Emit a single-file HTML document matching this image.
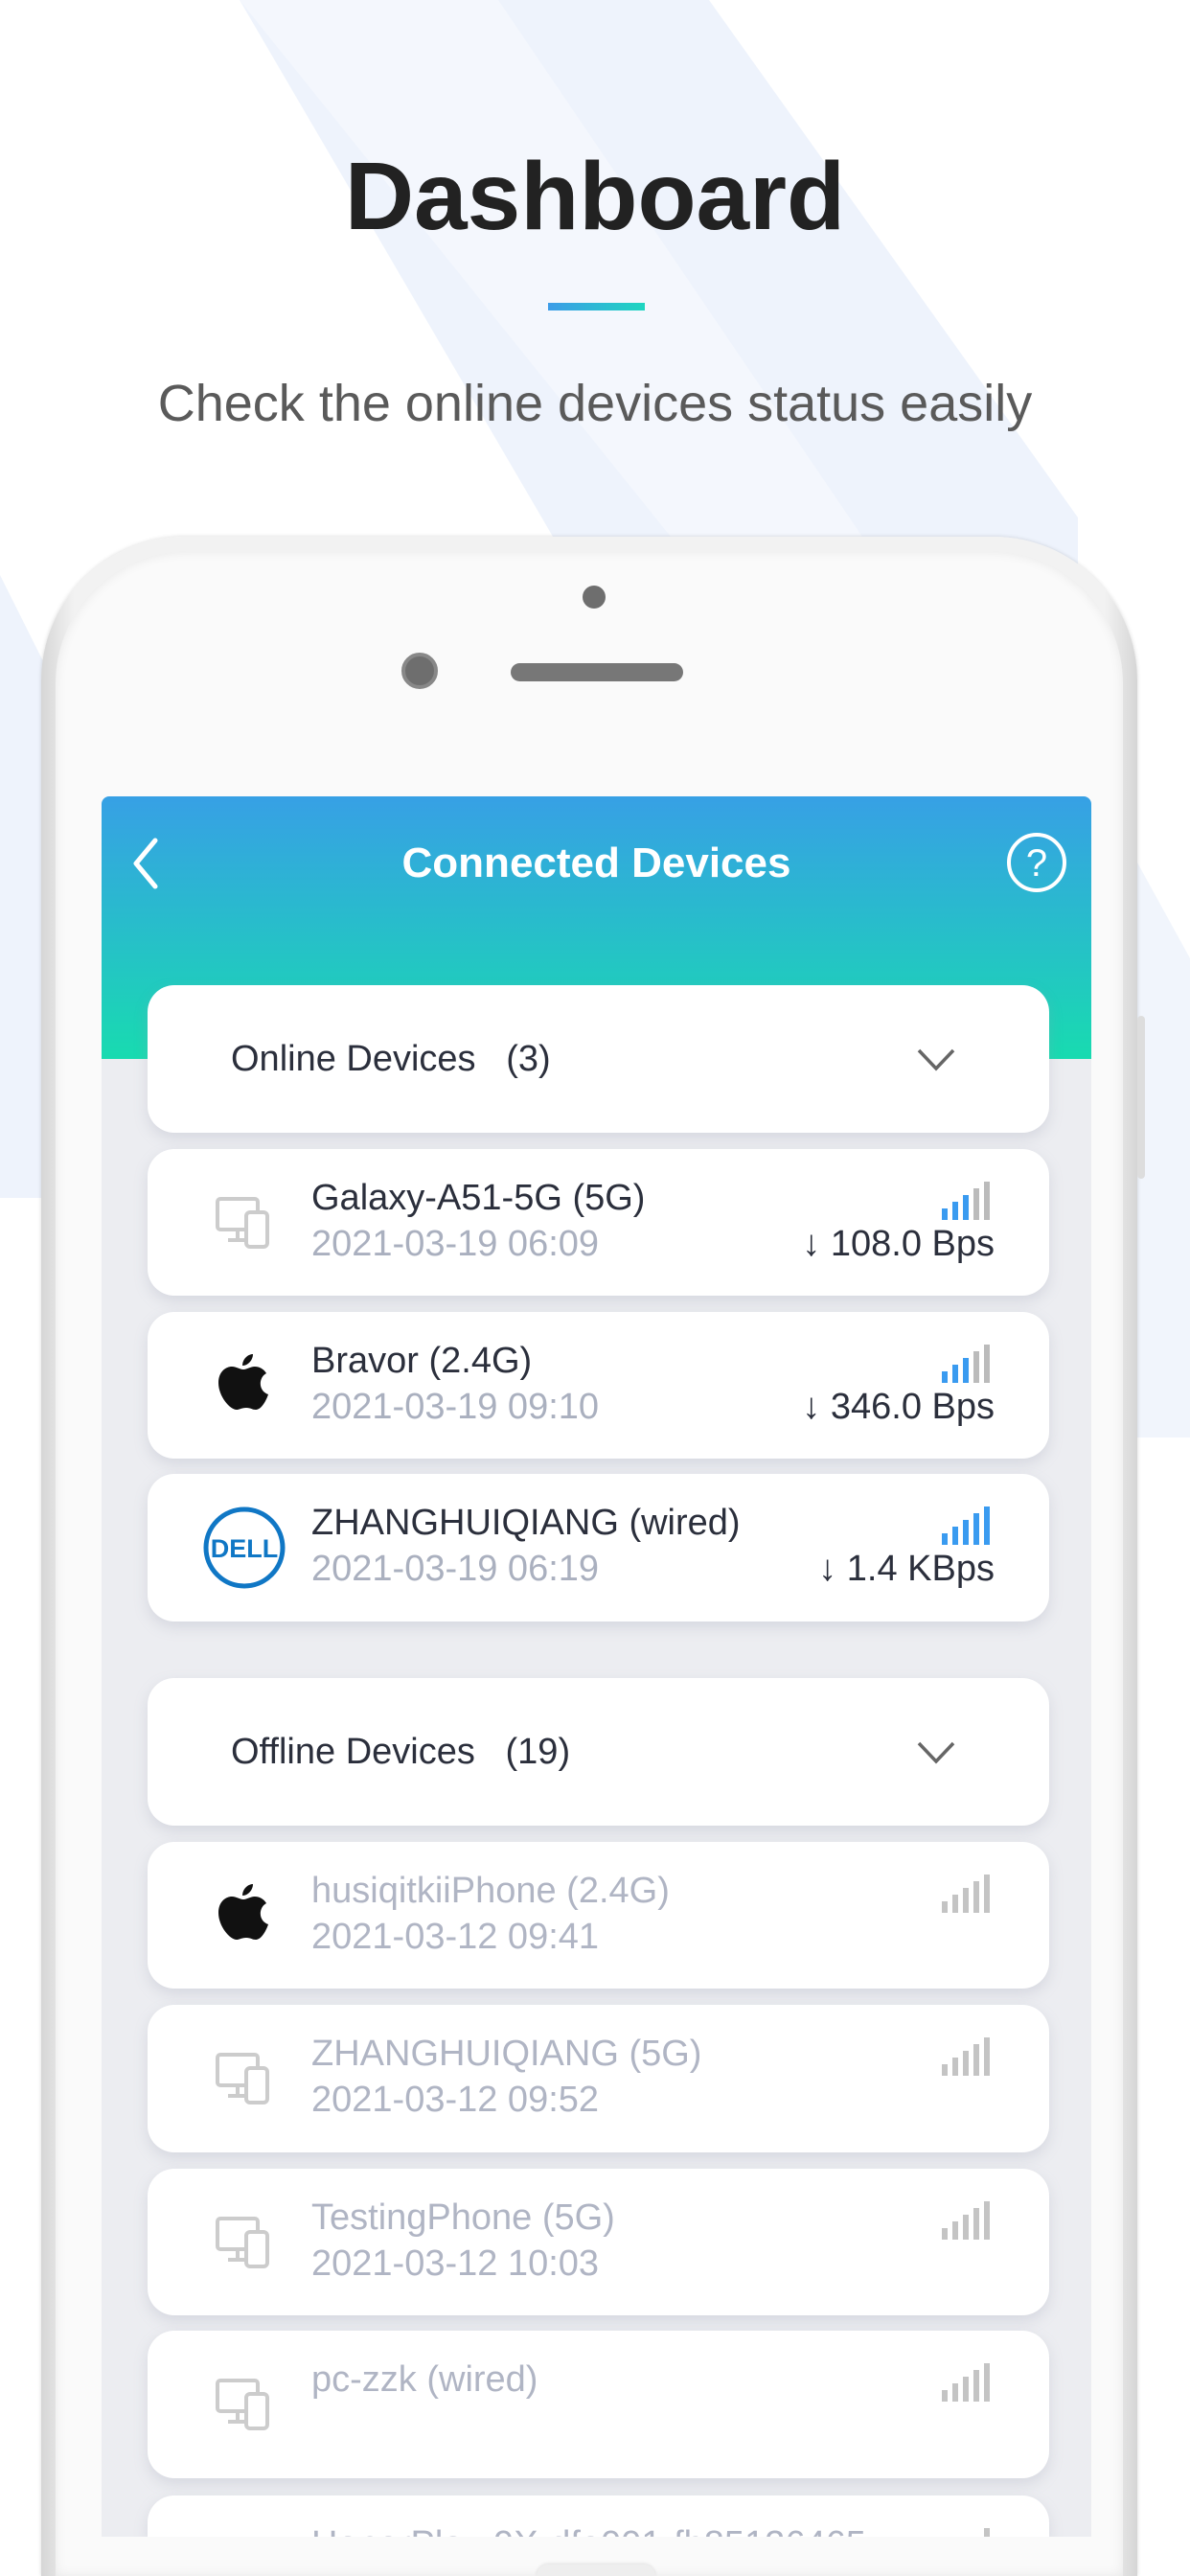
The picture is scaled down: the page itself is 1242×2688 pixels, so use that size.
<!DOCTYPE html>
<html style="width:1242px;height:2688px;overflow:hidden"><head><meta charset="utf-8">
<style>
*{margin:0;padding:0;box-sizing:border-box}
html,body{width:1242px;height:2688px;overflow:hidden}
body{background:#fff;font-family:"Liberation Sans",sans-serif}
#wrap{position:relative;width:1242px;height:2688px;overflow:hidden;background:#fff}
.abs{position:absolute}
.card{position:absolute;left:154px;width:941px;background:#fff;border-radius:28px;box-shadow:0 6px 14px rgba(150,155,175,0.25)}
.name{position:absolute;left:171px;top:26px;font-size:38px;line-height:50px;color:#2b2f3c;white-space:nowrap}
.date{position:absolute;left:171px;top:74px;font-size:38px;line-height:50px;color:#aab0bf;white-space:nowrap}
.off .name,.off .date{color:#b0b5c4}
.speed{position:absolute;right:57px;top:74px;font-size:38px;line-height:50px;color:#2b2f3c;white-space:nowrap}
.sig{position:absolute;left:829px;top:34px}
.ico{position:absolute;left:70px;top:46px}
.hdr{font-size:38px;line-height:50px;color:#2b2f3c;position:absolute;left:87px;top:52px;white-space:pre}
</style></head><body><div id="wrap">
<svg class="abs" style="left:0;top:0" width="1242" height="2688">
<polygon points="250,0 740,0 1125,540 1125,1250 980,1250" fill="#eef3fc"/>
<polygon points="250,0 520,0 900,560 700,560" fill="#f4f7fd"/>
<polygon points="0,600 0,1250 60,1250 60,720" fill="#eef3fc"/>
<polygon points="1187,900 1242,1000 1242,1500 1187,1500" fill="#f1f5fc"/>
</svg>
<div class="abs" style="left:0;width:1242px;top:140px;text-align:center;font-size:100px;font-weight:bold;color:#222;line-height:130px">Dashboard</div>
<div class="abs" style="left:572px;top:316px;width:101px;height:8px;background:linear-gradient(90deg,#3c9ce8,#1ed6c0)"></div>
<div class="abs" style="left:0;width:1242px;top:386px;text-align:center;font-size:54px;color:#5a5a5a;line-height:70px">Check the online devices status easily</div>

<!-- phone -->
<div class="abs" style="left:43px;top:560px;width:1144px;height:2128px;border-radius:150px 150px 0 0;background:linear-gradient(90deg,#d6d6d6,#f2f2f2 3%,#f2f2f2 97%,#d6d6d6);box-shadow:0 0 4px rgba(0,0,0,0.15)"></div>
<div class="abs" style="left:58px;top:575px;width:1114px;height:2113px;border-radius:138px 138px 0 0;background:#fafafa;box-shadow:inset 0 0 12px rgba(0,0,0,0.08)"></div>
<div class="abs" style="left:1187px;top:1060px;width:8px;height:170px;background:#ddd;border-radius:4px"></div>
<div class="abs" style="left:608px;top:611px;width:24px;height:24px;border-radius:50%;background:#6e6e6e"></div>
<div class="abs" style="left:419px;top:681px;width:38px;height:38px;border-radius:50%;background:#6e6e6e;border:4px solid #888"></div>
<div class="abs" style="left:533px;top:692px;width:180px;height:19px;border-radius:10px;background:#777"></div>

<!-- screen -->
<div class="abs" style="left:106px;top:831px;width:1033px;height:1816px;background:#ecedf1;border-radius:8px 8px 0 0;overflow:hidden">
 <div class="abs" style="left:0;top:0;width:1033px;height:274px;background:linear-gradient(180deg,#37a0e5,#18dbb0)"></div>
 <div class="abs" style="left:0;width:1033px;top:42px;text-align:center;color:#fff;font-size:44px;font-weight:bold;line-height:56px">Connected Devices</div>
 <svg class="abs" style="left:28px;top:42px" width="36" height="56"><polyline points="28,4 8,28 28,52" fill="none" stroke="#fff" stroke-width="5" stroke-linecap="round" stroke-linejoin="round"/></svg>
 <svg class="abs" style="left:943px;top:36px" width="66" height="66"><circle cx="33" cy="33" r="29" fill="none" stroke="#fff" stroke-width="4"/><text x="33" y="47" text-anchor="middle" font-size="40" fill="#fff" font-family="Liberation Sans">?</text></svg>
</div>

<div class="abs" style="left:106px;top:831px;width:1033px;height:1816px;overflow:hidden">
<div style="position:absolute;left:-106px;top:-831px;width:1242px;height:2688px">

<div class="card" style="top:1028px;height:154px"><div class="hdr">Online Devices   (3)</div>
<svg class="abs" style="left:802px;top:65px" width="42" height="26"><polyline points="3,3 21,22 39,3" fill="none" stroke="#666" stroke-width="3.5"/></svg></div>

<div class="card" style="top:1199px;height:153px">
 <svg class="ico" width="60" height="60" viewBox="0 0 60 60"><rect x="3" y="6" width="42" height="32" rx="3" fill="none" stroke="#ccc" stroke-width="4"/><line x1="24" y1="38" x2="24" y2="48" stroke="#ccc" stroke-width="4"/><line x1="14" y1="49" x2="32" y2="49" stroke="#ccc" stroke-width="4"/><rect x="33" y="20" width="22" height="36" rx="4" fill="#fff" stroke="#ccc" stroke-width="4"/></svg>
 <div class="name">Galaxy-A51-5G (5G)</div><div class="date">2021-03-19 06:09</div><div class="speed">↓ 108.0 Bps</div>
 <svg class="sig" width="54" height="40"><rect x="0" y="28" width="6" height="12" fill="#3a9bf0"/><rect x="11" y="21" width="6" height="19" fill="#3a9bf0"/><rect x="22" y="14" width="6" height="26" fill="#3a9bf0"/><rect x="33" y="7" width="6" height="33" fill="#bbb"/><rect x="44" y="0" width="6" height="40" fill="#bbb"/></svg>
</div>

<div class="card" style="top:1369px;height:153px">
 <svg class="ico" width="60" height="64" viewBox="0 0 60 64" style="top:42px"><path d="M40 2c0 6-5 12-11 12 0-6 5-12 11-12z" fill="#111"/><path d="M30 18c4 0 7-3 12-3 4 0 9 2 12 7-9 5-8 19 2 22-2 6-7 16-13 16-4 0-5-2-10-2s-7 2-10 2C16 60 4 46 4 32 4 20 12 15 18 15c5 0 8 3 12 3z" fill="#111"/></svg>
 <div class="name">Bravor (2.4G)</div><div class="date">2021-03-19 09:10</div><div class="speed">↓ 346.0 Bps</div>
 <svg class="sig" width="54" height="40"><rect x="0" y="28" width="6" height="12" fill="#3a9bf0"/><rect x="11" y="21" width="6" height="19" fill="#3a9bf0"/><rect x="22" y="14" width="6" height="26" fill="#3a9bf0"/><rect x="33" y="7" width="6" height="33" fill="#bbb"/><rect x="44" y="0" width="6" height="40" fill="#bbb"/></svg>
</div>

<div class="card" style="top:1538px;height:154px">
 <svg class="ico" width="90" height="90" style="left:56px;top:32px"><circle cx="45" cy="45" r="40" fill="none" stroke="#1077c5" stroke-width="5"/><text x="45" y="55" text-anchor="middle" font-size="27" font-weight="bold" fill="#1077c5" font-family="Liberation Sans">DELL</text></svg>
 <div class="name">ZHANGHUIQIANG (wired)</div><div class="date">2021-03-19 06:19</div><div class="speed">↓ 1.4 KBps</div>
 <svg class="sig" width="54" height="40"><rect x="0" y="28" width="6" height="12" fill="#3a9bf0"/><rect x="11" y="21" width="6" height="19" fill="#3a9bf0"/><rect x="22" y="14" width="6" height="26" fill="#3a9bf0"/><rect x="33" y="7" width="6" height="33" fill="#3a9bf0"/><rect x="44" y="0" width="6" height="40" fill="#3a9bf0"/></svg>
</div>

<div class="card" style="top:1751px;height:154px"><div class="hdr">Offline Devices   (19)</div>
<svg class="abs" style="left:802px;top:65px" width="42" height="26"><polyline points="3,3 21,22 39,3" fill="none" stroke="#666" stroke-width="3.5"/></svg></div>

<div class="card off" style="top:1922px;height:153px">
 <svg class="ico" width="60" height="64" viewBox="0 0 60 64" style="top:42px"><path d="M40 2c0 6-5 12-11 12 0-6 5-12 11-12z" fill="#111"/><path d="M30 18c4 0 7-3 12-3 4 0 9 2 12 7-9 5-8 19 2 22-2 6-7 16-13 16-4 0-5-2-10-2s-7 2-10 2C16 60 4 46 4 32 4 20 12 15 18 15c5 0 8 3 12 3z" fill="#111"/></svg>
 <div class="name">husiqitkiiPhone (2.4G)</div><div class="date">2021-03-12 09:41</div>
 <svg class="sig" width="54" height="40"><rect x="0" y="28" width="6" height="12" fill="#c4c4c4"/><rect x="11" y="21" width="6" height="19" fill="#c4c4c4"/><rect x="22" y="14" width="6" height="26" fill="#c4c4c4"/><rect x="33" y="7" width="6" height="33" fill="#c4c4c4"/><rect x="44" y="0" width="6" height="40" fill="#c4c4c4"/></svg>
</div>

<div class="card off" style="top:2092px;height:154px">
 <svg class="ico" width="60" height="60" viewBox="0 0 60 60"><rect x="3" y="6" width="42" height="32" rx="3" fill="none" stroke="#ccc" stroke-width="4"/><line x1="24" y1="38" x2="24" y2="48" stroke="#ccc" stroke-width="4"/><line x1="14" y1="49" x2="32" y2="49" stroke="#ccc" stroke-width="4"/><rect x="33" y="20" width="22" height="36" rx="4" fill="#fff" stroke="#ccc" stroke-width="4"/></svg>
 <div class="name">ZHANGHUIQIANG (5G)</div><div class="date">2021-03-12 09:52</div>
 <svg class="sig" width="54" height="40"><rect x="0" y="28" width="6" height="12" fill="#c4c4c4"/><rect x="11" y="21" width="6" height="19" fill="#c4c4c4"/><rect x="22" y="14" width="6" height="26" fill="#c4c4c4"/><rect x="33" y="7" width="6" height="33" fill="#c4c4c4"/><rect x="44" y="0" width="6" height="40" fill="#c4c4c4"/></svg>
</div>

<div class="card off" style="top:2263px;height:153px">
 <svg class="ico" width="60" height="60" viewBox="0 0 60 60"><rect x="3" y="6" width="42" height="32" rx="3" fill="none" stroke="#ccc" stroke-width="4"/><line x1="24" y1="38" x2="24" y2="48" stroke="#ccc" stroke-width="4"/><line x1="14" y1="49" x2="32" y2="49" stroke="#ccc" stroke-width="4"/><rect x="33" y="20" width="22" height="36" rx="4" fill="#fff" stroke="#ccc" stroke-width="4"/></svg>
 <div class="name">TestingPhone (5G)</div><div class="date">2021-03-12 10:03</div>
 <svg class="sig" width="54" height="40"><rect x="0" y="28" width="6" height="12" fill="#c4c4c4"/><rect x="11" y="21" width="6" height="19" fill="#c4c4c4"/><rect x="22" y="14" width="6" height="26" fill="#c4c4c4"/><rect x="33" y="7" width="6" height="33" fill="#c4c4c4"/><rect x="44" y="0" width="6" height="40" fill="#c4c4c4"/></svg>
</div>

<div class="card off" style="top:2432px;height:154px">
 <svg class="ico" width="60" height="60" viewBox="0 0 60 60"><rect x="3" y="6" width="42" height="32" rx="3" fill="none" stroke="#ccc" stroke-width="4"/><line x1="24" y1="38" x2="24" y2="48" stroke="#ccc" stroke-width="4"/><line x1="14" y1="49" x2="32" y2="49" stroke="#ccc" stroke-width="4"/><rect x="33" y="20" width="22" height="36" rx="4" fill="#fff" stroke="#ccc" stroke-width="4"/></svg>
 <div class="name">pc-zzk (wired)</div>
 <svg class="sig" width="54" height="40"><rect x="0" y="28" width="6" height="12" fill="#c4c4c4"/><rect x="11" y="21" width="6" height="19" fill="#c4c4c4"/><rect x="22" y="14" width="6" height="26" fill="#c4c4c4"/><rect x="33" y="7" width="6" height="33" fill="#c4c4c4"/><rect x="44" y="0" width="6" height="40" fill="#c4c4c4"/></svg>
</div>

<div class="card off" style="top:2604px;height:43px;border-radius:28px 28px 0 0">
 <div class="name">HonorPlay-9X-dfe001-fb85126465</div>
 <svg class="sig" width="54" height="9"><rect x="44" y="0" width="6" height="9" fill="#c4c4c4"/></svg>
</div>

</div></div>
<div class="abs" style="left:560px;top:2676px;width:124px;height:12px;border-radius:62px 62px 0 0;background:#eee;box-shadow:0 -1px 3px rgba(0,0,0,0.1)"></div>
</div></body></html>
